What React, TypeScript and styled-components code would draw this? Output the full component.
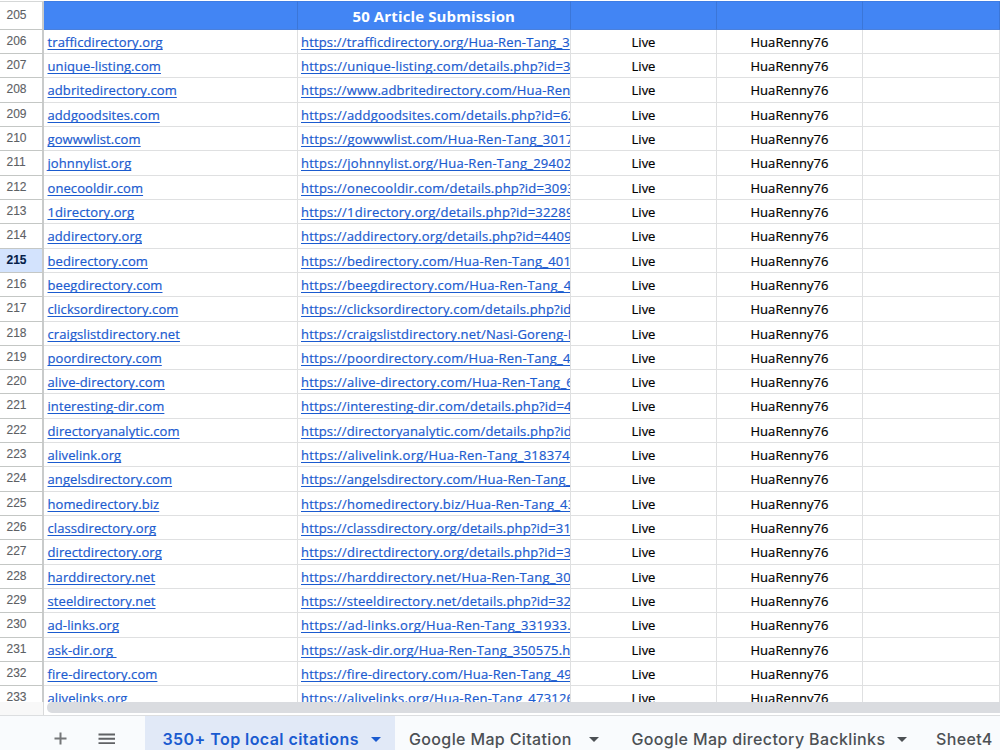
import React from 'react';
import styled, { createGlobalStyle } from 'styled-components';

const Global = createGlobalStyle`
  * { box-sizing: border-box; }
  body { margin: 0; background: #fff; overflow: hidden; }
`;

const Page = styled.div`
  width: 1000px;
  height: 750px;
  display: flex;
  flex-direction: column;
  overflow: hidden;
  background: #fff;
`;

const Grid = styled.div`
  height: 702px;
  flex: none;
  overflow: hidden;
  padding-top: 1px;
`;

const Row = styled.div<{ $header?: boolean }>`
  display: grid;
  grid-template-columns: 44px 253.5px 273.5px 146px 146px 1fr;
  grid-template-rows: 100%;
  height: ${p => (p.$header ? 28.75 : 24.32)}px;
`;

const RowNumber = styled.div<{ $active?: boolean; $header?: boolean }>`
  border-right: 2px solid #c9cbcb;
  border-bottom: 1px solid #c4c7c5;
  border-top: ${p => (p.$header ? '1px solid #d5d7d7' : '0')};
  background: ${p => (p.$active ? '#d3e3fd' : '#fff')};
  color: ${p => (p.$active ? '#041e49' : '#5c6064')};
  font: ${p => (p.$active ? 700 : 400)} 12px 'Liberation Sans', Arial, sans-serif;
  -webkit-text-stroke: 0.1px currentColor;
  line-height: ${p => (p.$header ? 27 : 23)}px;
  padding-left: 6.5px;
`;

const Cell = styled.div<{ $center?: boolean; $spacing?: number }>`
  border-right: 1px solid #dfe0e1;
  border-bottom: 1px solid #dfe0e1;
  overflow: hidden;
  white-space: nowrap;
  padding-left: ${p => (p.$center ? 0 : 3.5)}px;
  text-align: ${p => (p.$center ? 'center' : 'left')};
  font: 13px 'Open Sans', sans-serif;
  letter-spacing: ${p => p.$spacing ?? 0}px;
  line-height: 25px;
  color: #000;
  -webkit-text-stroke: 0.2px currentColor;
`;

const HeaderCell = styled.div`
  background: #4285f4;
  border-right: 1px solid #3b76d8;
  border-top: 1px solid #3f7de4;
  border-bottom: 1px solid #4a80dc;
  color: #fff;
  text-align: center;
  font: 700 15px 'Open Sans', sans-serif;
  letter-spacing: 0.13px;
  line-height: 28px;
`;

const Link = styled.span`
  color: #1b5bcf;
  text-decoration: underline;
  text-decoration-skip-ink: none;
  text-underline-offset: 2px;
  text-decoration-thickness: 1px;
`;

const ScrollStrip = styled.div`
  height: 14px;
  flex: none;
  display: flex;
  border-bottom: 1px solid #dcdee0;
`;
const ScrollCorner = styled.div`
  width: 44px;
  background: #f8f8f8;
  border-right: 1px solid #d9dadb;
`;
const ScrollTrack = styled.div`
  flex: 1;
  padding-left: 3px;
`;
const ScrollThumb = styled.div`
  height: 10.5px;
  background: #dadce0;
  border-radius: 5px 0 0 5px;
`;

const TabBar = styled.div`
  flex: 1;
  display: flex;
  background: #f9fbfd;
`;
const Tools = styled.div`
  width: 144.5px;
  flex: none;
  display: flex;
  gap: 29px;
  padding: 14px 0 0 52px;
`;
const Tab = styled.div<{ $active?: boolean; $width: number; $inset?: number }>`
  width: ${p => p.$width}px;
  flex: none;
  display: flex;
  align-items: center;
  justify-content: space-between;
  padding: 12px 14px 0 ${p => p.$inset ?? 14}px;
  background: ${p => (p.$active ? '#e1e9f7' : 'transparent')};
  color: ${p => (p.$active ? '#1a5bd0' : '#4c5054')};
  font: ${p => (p.$active ? 600 : 500)} 16px Inter, sans-serif;
  letter-spacing: ${p => (p.$active ? 0.43 : 0.36)}px;
  white-space: nowrap;
`;

const rows: [string, string, number?][] = [
  ['trafficdirectory.org', 'https://trafficdirectory.org/Hua-Ren-Tang_3'],
  ['unique-listing.com', 'https://unique-listing.com/details.php?id=3', 0.23],
  ['adbritedirectory.com', 'https://www.adbritedirectory.com/Hua-Ren'],
  ['addgoodsites.com', 'https://addgoodsites.com/details.php?id=62', 0.2],
  ['gowwwlist.com', 'https://gowwwlist.com/Hua-Ren-Tang_3017', 0.26],
  ['johnnylist.org', 'https://johnnylist.org/Hua-Ren-Tang_29402', 0.25],
  ['onecooldir.com', 'https://onecooldir.com/details.php?id=3093', 0.22],
  ['1directory.org', 'https://1directory.org/details.php?id=32289', 0.22],
  ['addirectory.org', 'https://addirectory.org/details.php?id=4409'],
  ['bedirectory.com', 'https://bedirectory.com/Hua-Ren-Tang_401', 0.2],
  ['beegdirectory.com', 'https://beegdirectory.com/Hua-Ren-Tang_4', 0.22],
  ['clicksordirectory.com', 'https://clicksordirectory.com/details.php?id', 0.19],
  ['craigslistdirectory.net', 'https://craigslistdirectory.net/Nasi-Goreng-H'],
  ['poordirectory.com', 'https://poordirectory.com/Hua-Ren-Tang_4', 0.22],
  ['alive-directory.com', 'https://alive-directory.com/Hua-Ren-Tang_6', 0.22],
  ['interesting-dir.com', 'https://interesting-dir.com/details.php?id=4'],
  ['directoryanalytic.com', 'https://directoryanalytic.com/details.php?id'],
  ['alivelink.org', 'https://alivelink.org/Hua-Ren-Tang_318374', 0.27],
  ['angelsdirectory.com', 'https://angelsdirectory.com/Hua-Ren-Tang_'],
  ['homedirectory.biz', 'https://homedirectory.biz/Hua-Ren-Tang_43', 0.21],
  ['classdirectory.org', 'https://classdirectory.org/details.php?id=31'],
  ['directdirectory.org', 'https://directdirectory.org/details.php?id=3', 0.22],
  ['harddirectory.net', 'https://harddirectory.net/Hua-Ren-Tang_30', 0.2],
  ['steeldirectory.net', 'https://steeldirectory.net/details.php?id=32', 0.19],
  ['ad-links.org', 'https://ad-links.org/Hua-Ren-Tang_331933.', 0.26],
  ['ask-dir.org\u00a0', 'https://ask-dir.org/Hua-Ren-Tang_350575.h', 0.2],
  ['fire-directory.com', 'https://fire-directory.com/Hua-Ren-Tang_49'],
  ['alivelinks.org', 'https://alivelinks.org/Hua-Ren-Tang_473126', 0.22],
];

const Caret = () => (
  <svg width="10" height="5" viewBox="0 0 10 5"><path d="M0 0h10L5 5z" fill="currentColor" /></svg>
);

export default function App() {
  return (
    <Page>
      <Global />
      <Grid>
        <Row $header>
          <RowNumber $header>205</RowNumber>
          <HeaderCell />
          <HeaderCell>50 Article Submission</HeaderCell>
          <HeaderCell />
          <HeaderCell />
          <HeaderCell />
        </Row>
        {rows.map(([site, url, spacing], i) => (
          <Row key={site}>
            <RowNumber $active={i === 9}>{206 + i}</RowNumber>
            <Cell $spacing={0.09}><Link>{site}</Link></Cell>
            <Cell $spacing={spacing ?? 0.17}><Link>{url}</Link></Cell>
            <Cell $center>Live</Cell>
            <Cell $center $spacing={0.07}>HuaRenny76</Cell>
            <Cell />
          </Row>
        ))}
      </Grid>
      <ScrollStrip>
        <ScrollCorner />
        <ScrollTrack><ScrollThumb /></ScrollTrack>
      </ScrollStrip>
      <TabBar>
        <Tools>
          <svg width="17" height="17" viewBox="0 0 17 17"><path d="M8.5 2.5v12M2.5 8.5h12" stroke="#757779" strokeWidth="2" /></svg>
          <svg width="17" height="17" viewBox="0 0 17 17"><path d="M.5 4.5h17M.5 8.8h17M.5 13.1h17" stroke="#606265" strokeWidth="1.9" /></svg>
        </Tools>
        <Tab $active $width={250.5} $inset={18}>350+ Top local citations<Caret /></Tab>
        <Tab $width={218}>Google Map Citation<Caret /></Tab>
        <Tab $width={308} $inset={18.5}>Google Map directory Backlinks<Caret /></Tab>
        <Tab $width={90} $inset={15}>Sheet4</Tab>
      </TabBar>
    </Page>
  );
}
